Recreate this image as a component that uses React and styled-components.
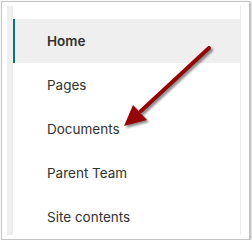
import React from 'react';
import styled, { createGlobalStyle } from 'styled-components';

const items = ['Home', 'Pages', 'Documents', 'Parent Team', 'Site contents'];

const App = () => {
	return (
		<>
			<GlobalStyle />
			<Frame>
				<Panel>
					<Strip />
					<Nav>
						{items.map((label, i) => (
							<NavItem key={label} $active={i === 0}>
								{label}
							</NavItem>
						))}
					</Nav>
				</Panel>
				<Arrow width="252" height="243" viewBox="0 0 252 243">
					<g style={{ filter: 'drop-shadow(2px 2px 1.2px rgba(0,0,0,0.45))' }}>
						<line
							x1="209"
							y1="48"
							x2="141"
							y2="111"
							stroke="#970606"
							strokeWidth="4"
							strokeLinecap="round"
						/>
						<polygon points="124,126 133,105 147,120" fill="#970606" />
					</g>
				</Arrow>
			</Frame>
		</>
	);
};

export default App;

const GlobalStyle = createGlobalStyle`
	html, body {
		margin: 0;
		padding: 0;
		background: #ffffff;
	}
	body {
		font-family: Inter, 'Noto Sans', sans-serif;
	}
`;

const Frame = styled.div`
	position: relative;
	box-sizing: border-box;
	margin: 1px 0 0 1px;
	width: 249px;
	height: 239px;
	border: 1px solid #c4c4c4;
	box-shadow: 1px 1px 2px rgba(0, 0, 0, 0.35);
	background: #ffffff;
	overflow: hidden;
	padding: 4px 0 0 5px;
`;

const Panel = styled.div`
	display: flex;
	height: 229px;
	width: 234px;
	overflow: hidden;
`;

const Strip = styled.div`
	width: 6px;
	flex-shrink: 0;
	background: #efefef;
`;

const Nav = styled.ul`
	list-style: none;
	margin: 0;
	padding: 13px 0 0;
	flex: 1;
	border-right: 1px solid #eeeeee;
`;

const NavItem = styled.li`
	box-sizing: border-box;
	height: 44px;
	display: flex;
	align-items: center;
	padding-left: 32px;
	font-size: 13.5px;
	color: #323130;
	font-weight: ${(p) => (p.$active ? 600 : 400)};
	background: ${(p) => (p.$active ? '#efefef' : 'transparent')};
	border-left: 2px solid ${(p) => (p.$active ? '#03787c' : 'transparent')};
`;

const Arrow = styled.svg`
	position: absolute;
	left: -2px;
	top: -2px;
	pointer-events: none;
`;
